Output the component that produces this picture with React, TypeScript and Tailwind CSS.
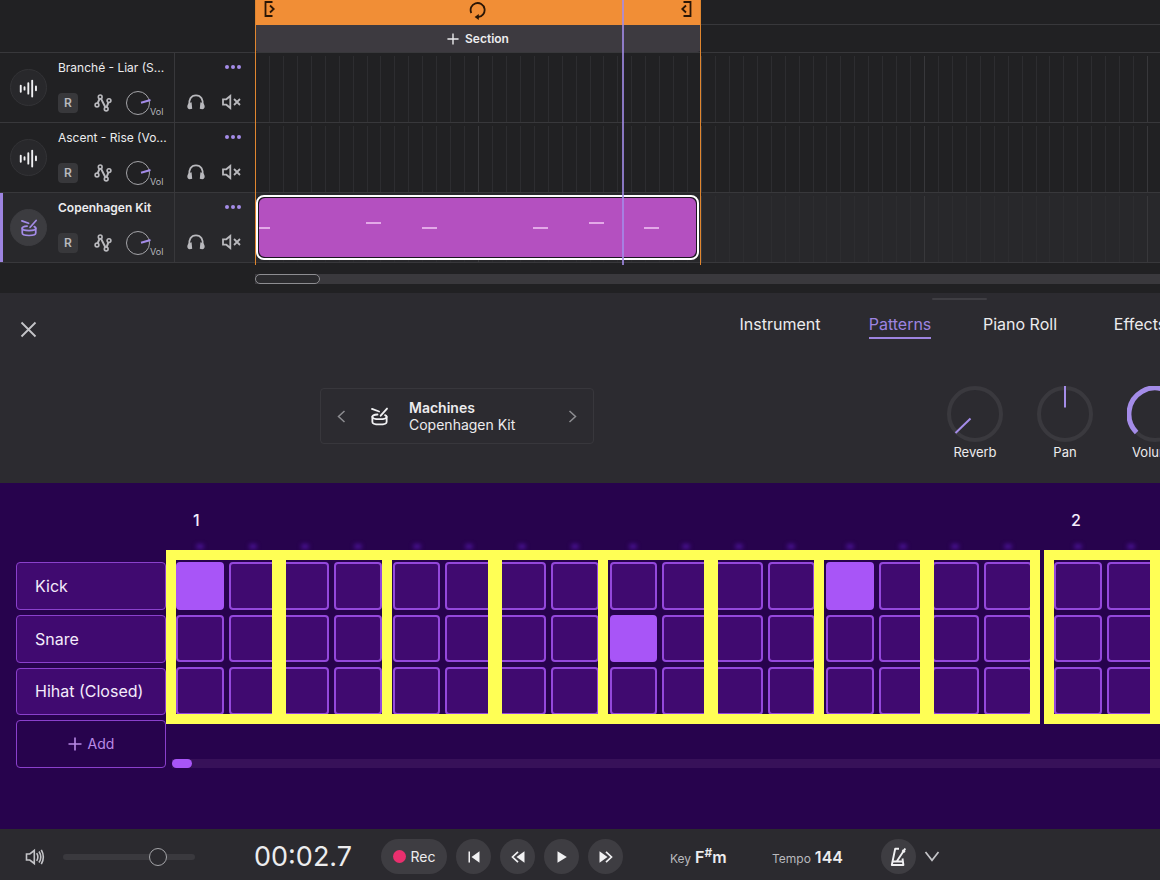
import React, { useState } from "react";
import clsx from "clsx";

type Track = {
  name: string;
  kind: "audio" | "drums";
};

const tracks: Track[] = [
  { name: "Branché - Liar (S...", kind: "audio" },
  { name: "Ascent - Rise (Vo...", kind: "audio" },
  { name: "Copenhagen Kit", kind: "drums" },
];

// one entry per half beat of the clip
const clipNotes = ["low", "", "high", "low", "", "low", "high", "low"];

const kit = ["Kick", "Snare", "Hihat (Closed)"];
const tabs = ["Instrument", "Patterns", "Piano Roll", "Effects"];

const WaveIcon = () => (
  <svg width="37" height="37" viewBox="0 0 37 37" stroke="#f1f1f3" strokeWidth="2" strokeLinecap="round">
    <path d="M10.3 16.5v6.5M14.3 18.2v2.6M18.3 14v11M22.4 11.2v16.8M26.4 17.5v4" />
  </svg>
);

const DrumIcon = ({ className }: { className?: string }) => (
  <svg viewBox="0 0 24 24" className={className} fill="none" stroke="currentColor" strokeWidth="2.3" strokeLinecap="round" strokeLinejoin="round">
    <path d="M2.500 2.500l9 3.200M21.500 2l-8 9" />
    <path d="M9.500 9.500C5.500 9.800 3 10.800 3 12.300c0 1.900 4 3.100 9 3.100s9-1.200 9-3.100c0-.9-.8-1.600-2-2.100" />
    <path d="M3 12.300v6.500c0 2 4 3.200 9 3.200s9-1.200 9-3.200v-6.500" />
  </svg>
);

const AutomationIcon = () => (
  <svg width="18" height="18" viewBox="0 0 18 18" fill="none" stroke="#b9b9bd" strokeWidth="1.600">
    <path d="M3.700 9.200L5.600 4.700M7 4.600l4.400 8.700M12.600 13.200l1.800-4.800" strokeWidth="2" />
    <circle cx="3" cy="11" r="1.900" />
    <circle cx="6.200" cy="2.900" r="1.900" />
    <circle cx="12.200" cy="15" r="1.900" />
    <circle cx="15" cy="6.600" r="1.900" />
  </svg>
);

const HeadphonesIcon = () => (
  <svg width="18" height="16" viewBox="0 0 18 16" fill="none">
    <path d="M2.300 12C1.400 5.500 4 1.300 9 1.300s7.600 4.200 6.700 10.700" stroke="#b9b9bd" strokeWidth="1.800" />
    <path d="M4.600 8.300C2 8.500.3 10.300.3 12.600c0 1.500.8 2.600 2.300 2.600 1 0 2-.2 2.600-.4zM13.400 8.300c2.600.2 4.300 2 4.300 4.300 0 1.500-.8 2.600-2.300 2.600-1 0-2-.2-2.600-.4z" fill="#b9b9bd" />
  </svg>
);

const MuteIcon = () => (
  <svg width="19" height="16" viewBox="0 0 19 16" fill="none" stroke="#b9b9bd" strokeWidth="1.800">
    <path d="M1 5.300h3.300L8.300 2v12l-4-3.300H1z" />
    <path d="M12 5l6 6M18 5l-6 6" />
  </svg>
);

const LoopIcon = () => (
  <svg width="18" height="19" viewBox="0 0 18 19" fill="none" stroke="#2a1606" strokeWidth="1.800">
    <path d="M2.300 12A7 7 0 1 1 9 16" />
    <path d="M5.600 16l4.200-3v6z" fill="#2a1606" stroke="none" />
  </svg>
);

const BracketIcon = ({ flip }: { flip?: boolean }) => (
  <svg width="11" height="16" viewBox="0 0 11 16" fill="none" stroke="#2a1606" strokeWidth="1.800" className={clsx(flip && "-scale-x-100")}>
    <path d="M8.500 1H1.500v14h7M6 4.500L9.700 8 6 11.500" />
  </svg>
);

const MetronomeIcon = () => (
  <svg width="17" height="20" viewBox="0 0 17 20" fill="none" stroke="#f1f1f3" strokeWidth="1.900" strokeLinejoin="round">
    <path d="M9 1.800H5.200L1.800 18h11.600l-.9-6.500" />
    <path d="M3 14.500h9.800M15.300 1.500L7 14" />
    <path d="M12.300 3.300l2.600 1.800" strokeWidth="2.400" />
  </svg>
);

const PlusIcon = ({ className }: { className?: string }) => (
  <svg viewBox="0 0 14 14" className={className} stroke="currentColor" strokeWidth="1.600">
    <path d="M7 .5v13M.5 7h13" />
  </svg>
);

const TrackHeader = ({ track, selected }: { track: Track; selected: boolean }) => (
  <div
    className={clsx(
      "flex h-[70px] border-b border-[#38383b]",
      selected && "bg-[#28282b] shadow-[inset_3px_0_0_#9d84e0]"
    )}
  >
    <div className="flex w-[175px] items-center gap-[11px] border-r border-[#38383b] pl-[10px]">
      <div
        className={clsx(
          "flex size-[37px] shrink-0 items-center justify-center rounded-full border",
          selected ? "border-[#3c3c40] bg-[#3c3c40]" : "border-[#333336] bg-[#28282b]"
        )}
      >
        {track.kind === "audio" ? <WaveIcon /> : <DrumIcon className="size-[18px] text-[#a48ce8]" />}
      </div>
      <div className="flex h-full flex-col pt-[5px]">
        <span className={clsx("whitespace-nowrap text-xs leading-5 text-[#ececee]", selected && "font-semibold")}>
          {track.name}
        </span>
        <div className="mt-[13px] flex h-6 items-center gap-4">
          <button aria-label="Record arm" className="size-5 rounded bg-[#38383b] text-xs font-semibold text-[#b9b9bd]">
            R
          </button>
          <button aria-label="Automation">
            <AutomationIcon />
          </button>
          <label className="relative -ml-[2px] flex h-6 items-end">
            <input type="range" defaultValue={80} aria-label={`${track.name} volume`} className="sr-only" />
            <svg width="26" height="24" viewBox="0 0 26 24" fill="none">
              <circle cx="12" cy="12" r="11.500" stroke="#a5a5a9" />
              <path d="M15 11.800l9.500-2.800" stroke="#a48ce8" strokeWidth="2" />
            </svg>
            <span className="-mr-4 -mb-[3px] -ml-[2px] text-[9px] leading-3 text-[#b9b9bd]">Vol</span>
          </label>
        </div>
      </div>
    </div>
    <div className="flex flex-1 flex-col pr-[14px] pl-3">
      <button aria-label="More" className="mt-[11px] flex h-[6px] items-center gap-[2px] self-end">
        <span className="size-1 rounded-full bg-[#a48ce8]" />
        <span className="size-1 rounded-full bg-[#a48ce8]" />
        <span className="size-1 rounded-full bg-[#a48ce8]" />
      </button>
      <div className="mt-6 flex items-center justify-between">
        <button aria-label="Solo">
          <HeadphonesIcon />
        </button>
        <button aria-label="Mute">
          <MuteIcon />
        </button>
      </div>
    </div>
  </div>
);

const LaneGrid = () => (
  <div className="absolute inset-0 flex overflow-hidden pt-[3px]">
    {Array.from({ length: 10 }, (_, bar) => (
      <div key={bar} className="flex w-[223px] shrink-0 border-l border-[#38383b]">
        {Array.from({ length: 16 }, (_, i) => (
          <span key={i} className={clsx("flex-1", i > 0 && "border-l border-[#2d2d30]")} />
        ))}
      </div>
    ))}
  </div>
);

const Clip = () => (
  <div className="relative ml-px h-[65px] w-[443px] rounded-lg border-2 border-white bg-[#1c1420] p-px">
    <div className="h-full overflow-hidden rounded-md bg-[#b450c0]">
      <div className="-mx-1 grid h-full grid-cols-8 items-center">
        {clipNotes.map((note, i) => (
          <span
            key={i}
            className={clsx("h-[2px] w-[15px]", note && "bg-[#e3a9e8]", note === "high" && "mb-[10px]")}
          />
        ))}
      </div>
    </div>
  </div>
);

const Arrangement = () => (
  <section className="flex bg-[#212123] pb-[9px]">
    <div className="w-[255px] shrink-0">
      <div className="h-[53px] border-b border-[#38383b]" />
      {tracks.map((track) => (
        <TrackHeader key={track.name} track={track} selected={track.kind === "drums"} />
      ))}
    </div>

    <div className="relative min-w-0 flex-1">
      <div className="flex h-[53px] border-b border-[#38383b]">
        <div className="w-[446px] shrink-0">
          <div className="flex h-[25px] items-start justify-between bg-[#f18e36] px-[9px] pt-px">
            <BracketIcon />
            <LoopIcon />
            <BracketIcon flip />
          </div>
          <button className="flex h-[27px] w-full items-center justify-center gap-[6px] rounded-b bg-[#3d3a40] text-xs font-semibold text-[#ececee]">
            <PlusIcon className="size-3" />
            Section
          </button>
        </div>
        <div className="h-[25px] flex-1 border-b border-[#38383b]" />
      </div>

      {tracks.map((track) => (
        <div
          key={track.name}
          className={clsx("relative h-[70px] border-b border-[#38383b] pt-[2px]", track.kind === "drums" && "bg-[#28282b]")}
        >
          <LaneGrid />
          {track.kind === "drums" && <Clip />}
        </div>
      ))}

      {/* loop region edges + playhead */}
      <div className="pointer-events-none absolute top-0 left-0 h-[265px] w-[446px] border-x border-[#e0862f]" />
      <div className="pointer-events-none absolute top-0 left-[367px] h-[265px] w-[2px] bg-[#a48ce8]/80" />

      <div className="mt-[11px] h-[10px] bg-[#3a393d]">
        <div className="h-[10px] w-[65px] rounded-full border border-[#8d8d91] bg-[#2b2b2e]" />
      </div>
    </div>
  </section>
);

const Knob = ({ label, value, children }: { label: string; value: number; children: React.ReactNode }) => (
  <label className="relative flex w-[90px] shrink-0 flex-col items-center text-[13px] leading-5 text-[#ececee]">
    <input type="range" defaultValue={value} className="sr-only" />
    <svg width="56" height="56" viewBox="0 0 56 56" fill="none">
      <circle cx="28" cy="28" r="26" stroke="#3a393e" strokeWidth="4" />
      {children}
    </svg>
    <span>{label}</span>
  </label>
);

const InstrumentPanel = () => {
  const [tab, setTab] = useState("Patterns");

  return (
    <section className="overflow-hidden bg-[#2c2b30] pb-[21px]">
      <div className="flex h-[10px] pt-[5px] pl-[932px]">
        <span className="h-[2px] w-[55px] rounded bg-[#3f3e43]" />
      </div>
      <div className="flex h-[52px] items-center justify-between">
        <button aria-label="Close" className="ml-5">
          <svg width="17" height="17" viewBox="0 0 17 17" stroke="#c4c4c8" strokeWidth="1.800">
            <path d="M1.500 1.500l14 14M15.500 1.500l-14 14" />
          </svg>
        </button>
        <nav className="-mr-10 flex pb-2">
          {tabs.map((name) => (
            <button key={name} onClick={() => setTab(name)} className="w-[120px] text-base">
              <span
                className={clsx(
                  "inline-block border-b-2 pb-px",
                  tab === name ? "border-[#9d84e0] text-[#9d84e0]" : "border-transparent text-[#ececee]"
                )}
              >
                {name}
              </span>
            </button>
          ))}
        </nav>
      </div>

      <div className="mt-[31px] flex items-start justify-between">
        <div className="mt-[2px] ml-80 flex h-14 w-[274px] shrink-0 items-center rounded border border-[#38373c] px-4">
          <button aria-label="Previous kit">
            <svg width="9" height="13" viewBox="0 0 9 13" fill="none" stroke="#8d8d91" strokeWidth="1.500">
              <path d="M7.500 1L1.500 6.500l6 5.500" />
            </svg>
          </button>
          <DrumIcon className="ml-6 size-[19px] text-[#f1f1f3]" />
          <div className="ml-5 flex-1 text-sm leading-[17px] text-[#ececee]">
            <p className="font-semibold">Machines</p>
            <p>Copenhagen Kit</p>
          </div>
          <button aria-label="Next kit">
            <svg width="9" height="13" viewBox="0 0 9 13" fill="none" stroke="#8d8d91" strokeWidth="1.500">
              <path d="M1.500 1l6 5.500-6 5.500" />
            </svg>
          </button>
        </div>
        <div className="-mr-10 flex">
          <Knob label="Reverb" value={0}>
            <path d="M23.500 32.500L8.500 47" stroke="#a48ce8" strokeWidth="2" />
          </Knob>
          <Knob label="Pan" value={50}>
            <path d="M28 0v21.500" stroke="#a48ce8" strokeWidth="2" />
          </Knob>
          <Knob label="Volume" value={80}>
            <path d="M9.600 46.400A26 26 0 1 1 53 21" stroke="#a48ce8" strokeWidth="5" />
            <path d="M34 26l17-5" stroke="#a48ce8" strokeWidth="2" />
          </Knob>
        </div>
      </div>
    </section>
  );
};

// Yellow frame splitting one bar into eight pairs of steps
const PairFrame = () => (
  <div className="pointer-events-none absolute -top-3 -right-2 -left-[10px] flex h-[174px] border-10 border-[#ffff55]">
    {Array.from({ length: 8 }, (_, i) => (
      <React.Fragment key={i}>
        <span className="flex-1" />
        {i < 7 && <span className={clsx("bg-[#ffff55]", i % 2 ? "w-[10px]" : "w-[14px]")} />}
      </React.Fragment>
    ))}
  </div>
);

const PatternEditor = () => {
  const [active, setActive] = useState<string[]>(["0-0-0", "1-0-8", "0-0-12"]);

  const toggle = (id: string) => {
    setActive((prev) => (prev.includes(id) ? prev.filter((a) => a !== id) : [...prev, id]));
  };

  return (
    <section className="flex flex-1 items-start bg-[#27034d] pt-[25px] pb-[61px]">
      <div className="mt-[54px] ml-4 grid h-[206px] w-[150px] shrink-0 grid-rows-4 gap-[5px]">
        {kit.map((name) => (
          <button
            key={name}
            className="rounded border border-[#8a40cc] bg-[#400a70] pl-[18px] text-left text-base text-[#f4ecfb]"
          >
            {name}
          </button>
        ))}
        <button className="flex items-center justify-center gap-[6px] rounded border border-[#8a40cc] text-sm text-[#b98ae6]">
          <PlusIcon className="size-[14px]" />
          Add
        </button>
      </div>

      <div className="flex h-[260px] min-w-0 flex-1 flex-col overflow-hidden pl-[10px]">
        <div className="flex gap-[22px]">
          {[0, 1].map((bar) => (
            <div key={bar} className="w-[856px] shrink-0">
              <p className="pl-[17px] text-base leading-6 font-medium text-[#f4ecfb]">{bar + 1}</p>
              <div className="mt-3 mb-[13px] grid grid-cols-4 gap-[11px]">
                {[0, 1, 2, 3].map((beat) => (
                  <div key={beat} className="grid grid-cols-4 gap-[5px]">
                    {[0, 1, 2, 3].map((i) => (
                      <span key={i} className="mx-auto h-[5px] w-[8px] rounded-full bg-[#4a1296] blur-[2px]" />
                    ))}
                  </div>
                ))}
              </div>
              <div className="relative">
                <div className="grid h-[153px] grid-cols-4 gap-[11px]">
                  {[0, 1, 2, 3].map((beat) => (
                    <div key={beat} className="grid grid-cols-4 grid-rows-3 gap-[5px]">
                      {kit.map((name, row) =>
                        [0, 1, 2, 3].map((i) => {
                          const step = beat * 4 + i;
                          const id = `${row}-${bar}-${step}`;
                          return (
                            <button
                              key={id}
                              aria-label={`${name} bar ${bar + 1} step ${step + 1}`}
                              aria-pressed={active.includes(id)}
                              onClick={() => toggle(id)}
                              className={clsx(
                                "rounded border-2",
                                active.includes(id)
                                  ? "border-[#a855f7] bg-[#a855f7]"
                                  : "border-[#9448dc] bg-[#400a70]"
                              )}
                            />
                          );
                        })
                      )}
                    </div>
                  ))}
                </div>
                <PairFrame />
              </div>
            </div>
          ))}
        </div>
        <div className="mt-auto -ml-1 h-[9px] bg-[#371159]">
          <div className="h-full w-5 rounded-full bg-[#a855f7]" />
        </div>
      </div>
    </section>
  );
};

const RoundButton = ({ label, children }: { label: string; children: React.ReactNode }) => (
  <button aria-label={label} className="flex size-[35px] shrink-0 items-center justify-center rounded-full bg-[#3e3d42]">
    {children}
  </button>
);

const Transport = () => (
  <footer className="flex h-[51px] items-center overflow-hidden bg-[#2b2a2f] pt-1 pl-[25px] text-[#ececee]">
    <svg width="20" height="18" viewBox="0 0 20 18" fill="none" stroke="#c4c4c8" strokeWidth="1.600">
      <path d="M1.500 6h3.300L9.300 2.500v13L4.800 12H1.500z" />
      <path d="M11.700 5.200c1.500 2.400 1.500 5.200 0 7.600M14 3.500c2.300 3.500 2.300 7.500 0 11M16.300 1.800c2.600 4.600 2.600 9.800 0 14.400" />
    </svg>
    <input
      type="range"
      aria-label="Master volume"
      defaultValue={75}
      className="ml-[18px] h-[6px] w-[132px] shrink-0 appearance-none rounded-full bg-[#3a393e] [&::-webkit-slider-thumb]:size-[18px] [&::-webkit-slider-thumb]:appearance-none [&::-webkit-slider-thumb]:rounded-full [&::-webkit-slider-thumb]:border [&::-webkit-slider-thumb]:border-[#a5a5a9] [&::-webkit-slider-thumb]:bg-[#2b2a2f]"
    />
    <span className="ml-[59px] w-[127px] shrink-0 text-[27px] leading-8">00:02.7</span>

    <div className="flex items-center gap-[9px]">
      <button className="flex h-[35px] w-[66px] items-center justify-center gap-[5px] rounded-full bg-[#3e3d42] text-sm">
        <span className="size-[13px] rounded-full bg-[#ea2f6e]" />
        Rec
      </button>
      <RoundButton label="Back to start">
        <svg width="12" height="12" viewBox="0 0 12 12" fill="#f1f1f3">
          <path d="M.5.5H2v11H.5zM11.500.3v11.400L3.500 6z" />
        </svg>
      </RoundButton>
      <RoundButton label="Rewind">
        <svg width="14" height="12" viewBox="0 0 14 12" fill="#f1f1f3">
          <path d="M7 .8L1.500 6 7 11.200" fill="none" stroke="#f1f1f3" strokeWidth="1.700" />
          <path d="M13.500.3v11.400L5.500 6z" />
        </svg>
      </RoundButton>
      <RoundButton label="Play">
        <svg width="10" height="12" viewBox="0 0 10 12" fill="#f1f1f3">
          <path d="M.5.2v11.600L9.800 6z" />
        </svg>
      </RoundButton>
      <RoundButton label="Fast forward">
        <svg width="14" height="12" viewBox="0 0 14 12" fill="#f1f1f3">
          <path d="M7 .8L12.500 6 7 11.200" fill="none" stroke="#f1f1f3" strokeWidth="1.700" />
          <path d="M.5.3v11.400L8.500 6z" />
        </svg>
      </RoundButton>
    </div>

    <p className="ml-[47px] flex w-[102px] shrink-0 items-baseline gap-1">
      <span className="text-xs text-[#b9b9bd]">Key</span>
      <span className="text-base font-semibold">
        F<sup className="text-xs">#</sup>m
      </span>
    </p>
    <p className="flex w-[109px] shrink-0 items-baseline gap-1">
      <span className="text-xs text-[#b9b9bd]">Tempo</span>
      <span className="text-base font-semibold">144</span>
    </p>
    <RoundButton label="Metronome">
      <MetronomeIcon />
    </RoundButton>
    <button aria-label="Metronome settings" className="ml-2">
      <svg width="16" height="11" viewBox="0 0 16 11" fill="none" stroke="#c4c4c8" strokeWidth="1.700">
        <path d="M1.500 1L8 9.300 14.500 1" />
      </svg>
    </button>
  </footer>
);

const App = () => {
  return (
    <div className="flex min-h-screen flex-col overflow-hidden bg-[#212123] font-['Inter','Liberation_Sans',sans-serif]">
      <Arrangement />
      <InstrumentPanel />
      <PatternEditor />
      <Transport />
    </div>
  );
};

export default App;
